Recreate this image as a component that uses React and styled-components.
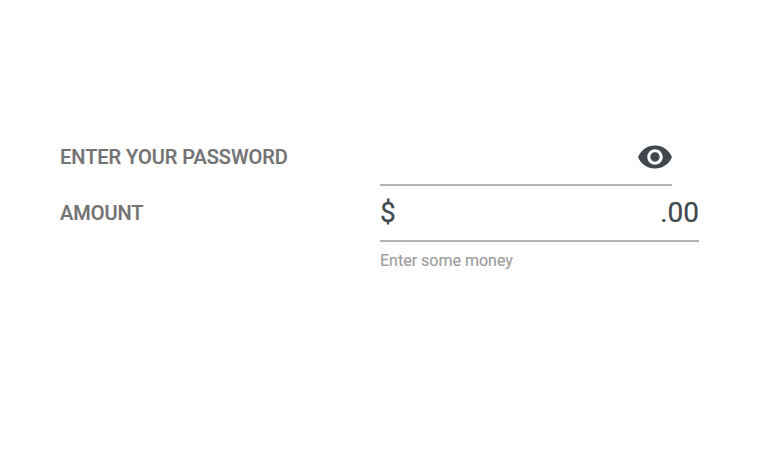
import React from "react";
import styled, { createGlobalStyle } from "styled-components";

const GlobalStyle = createGlobalStyle`
  * { box-sizing: border-box; }
  body { margin: 0; background: #fff; font-family: Roboto, sans-serif; }
`;

const Form = styled.form`
  display: flex;
  flex-direction: column;
  padding: 130px 60px 0;
`;

const Row = styled.div`
  display: grid;
  grid-template-columns: 320px auto;
  justify-content: start;
`;

const Label = styled.label`
  font-size: 20px;
  line-height: 24px;
  font-weight: 500;
  letter-spacing: -0.03px;
  -webkit-text-stroke: 0.2px;
  padding-top: 15px;
  color: #737373;
  text-transform: uppercase;
  white-space: nowrap;
`;

const Field = styled.div`
  display: flex;
  align-items: center;
  justify-content: space-between;
  width: ${({ $width }) => $width}px;
  height: 56px;
  border-bottom: 2px solid #afb6bb;
`;

const Affix = styled.span`
  font-size: 28px;
  line-height: 32px;
  color: #40484e;
  -webkit-text-stroke: 0.2px;
`;

const Eye = styled.svg`
  width: 38px;
  height: 38px;
  margin: 0 -2px 0 auto;
  fill: #40484e;
`;

const Hint = styled.div`
  font-size: 16px;
  line-height: 20px;
  margin-top: 9px;
  color: #9e9e9e;
  -webkit-text-stroke: 0.2px;
`;

export default function App() {
  return (
    <>
      <GlobalStyle />
      <Form>
        <Row>
          <Label>Enter your password</Label>
          <Field $width={292}>
            <Eye viewBox="-0.32 -0.32 24.64 24.64">
              <path d="M12 4.5C7 4.5 2.73 7.61 1 12c1.73 4.39 6 7.5 11 7.5s9.27-3.11 11-7.5c-1.73-4.39-6-7.5-11-7.5zM12 17c-2.76 0-5-2.24-5-5s2.24-5 5-5 5 2.24 5 5-2.24 5-5 5zm0-8c-1.66 0-3 1.34-3 3s1.34 3 3 3 3-1.34 3-3-1.34-3-3-3z" />
            </Eye>
          </Field>
        </Row>
        <Row>
          <Label>Amount</Label>
          <div>
            <Field $width={319}>
              <Affix>$</Affix>
              <Affix>.00</Affix>
            </Field>
            <Hint>Enter some money</Hint>
          </div>
        </Row>
      </Form>
    </>
  );
}
